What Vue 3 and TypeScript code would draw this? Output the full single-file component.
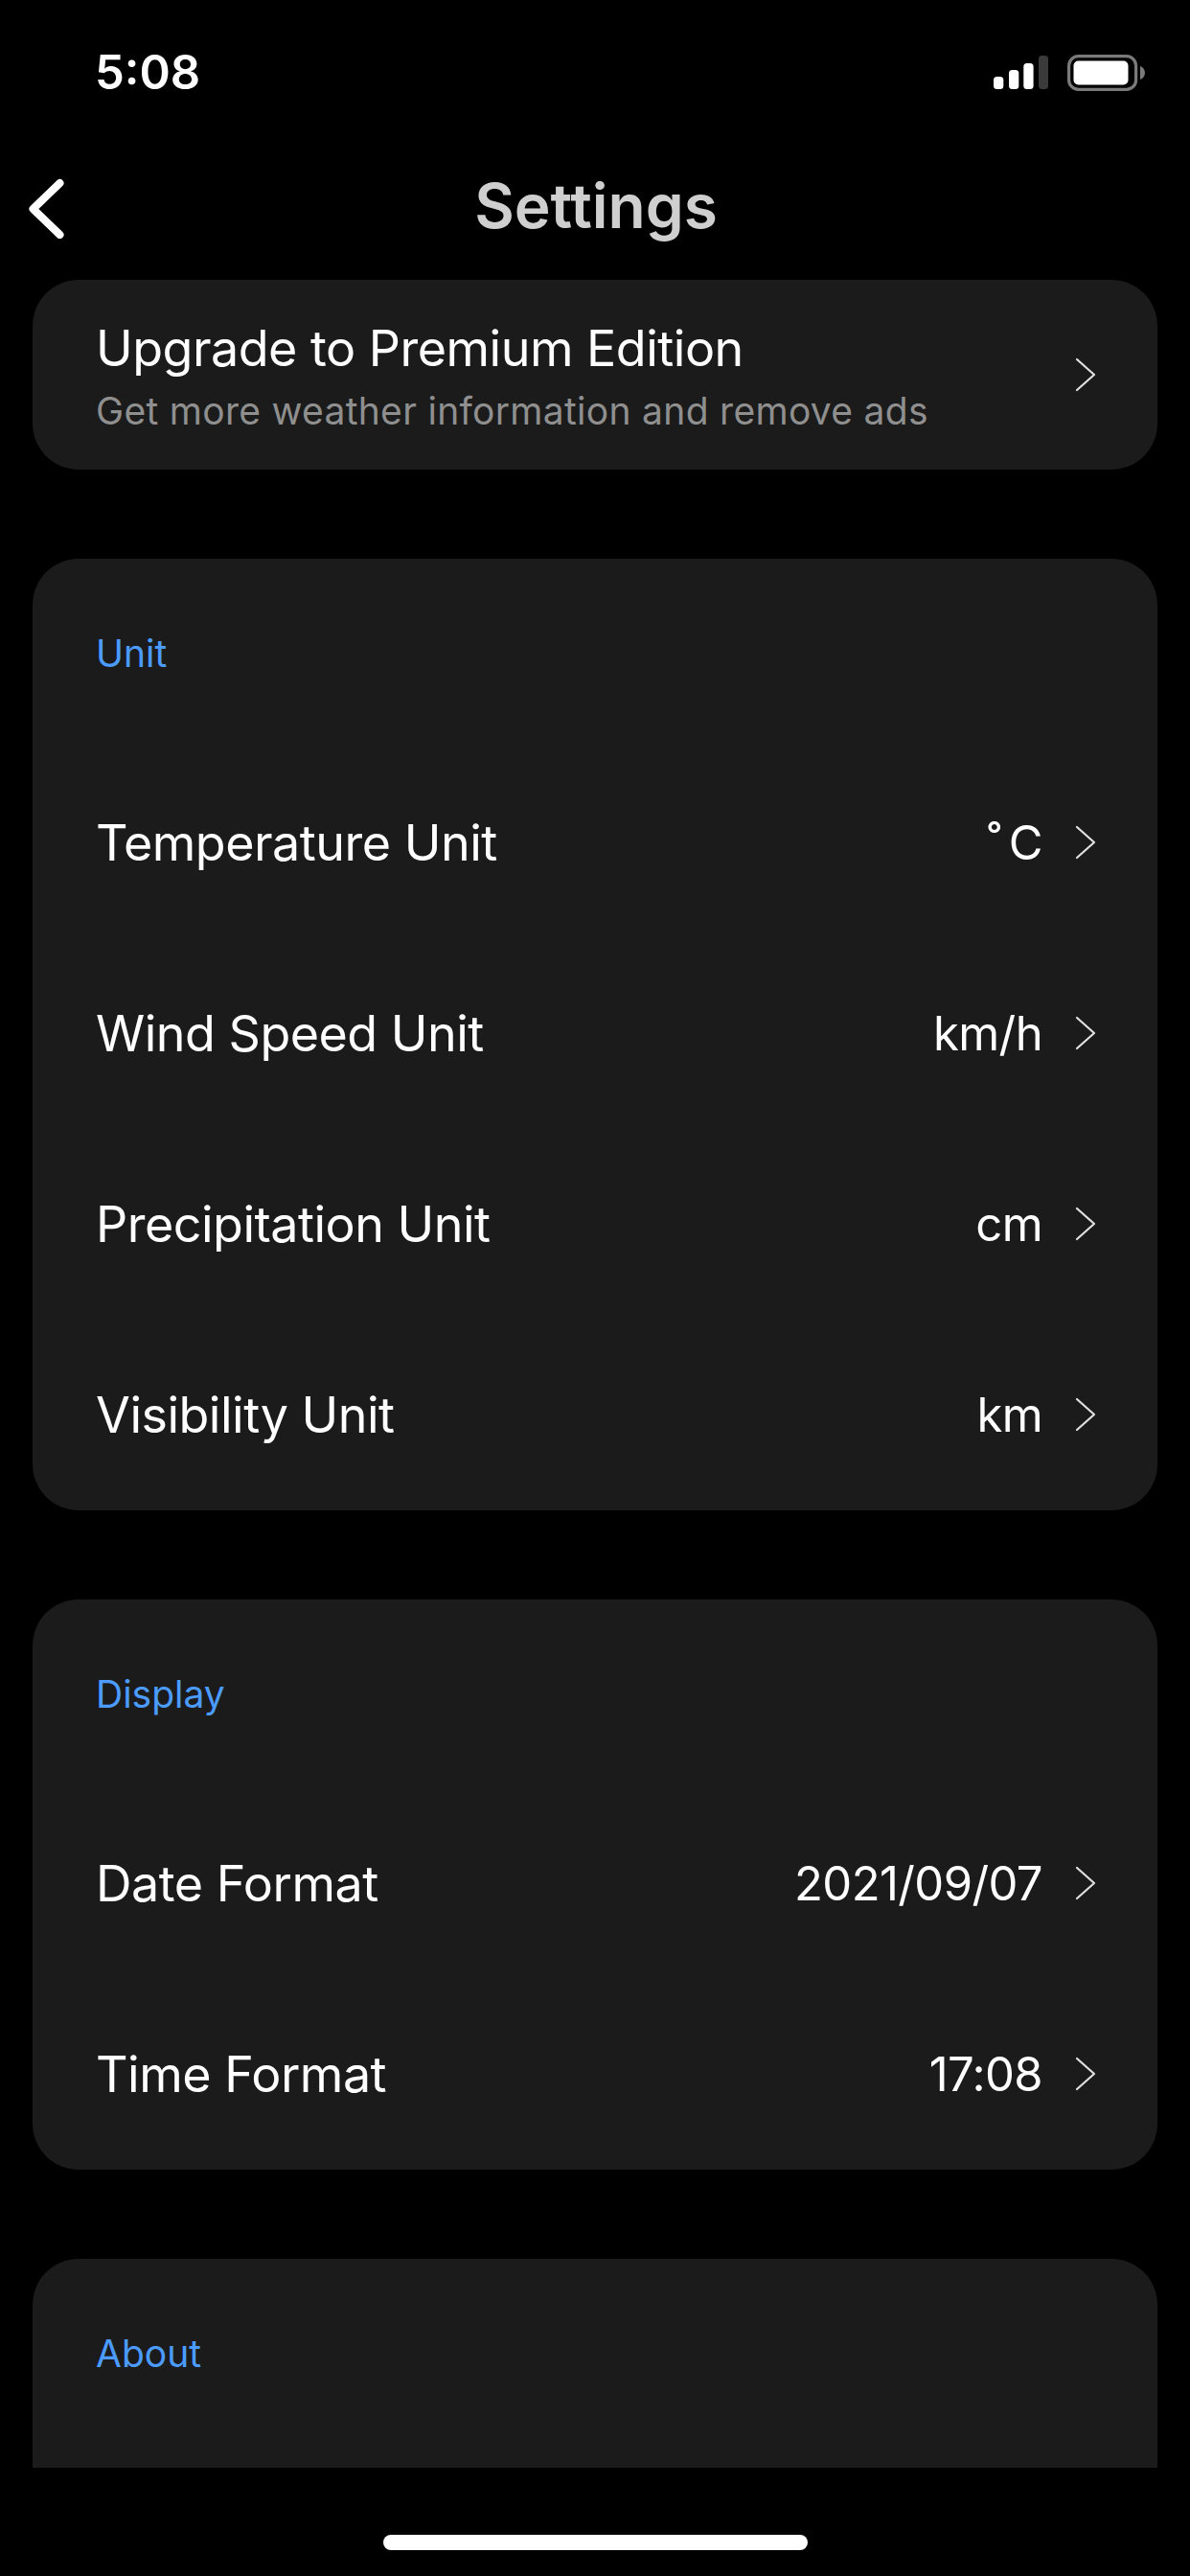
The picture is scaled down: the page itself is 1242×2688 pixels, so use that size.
<script setup lang="ts">
interface Row { label: string; value: string }
interface Section { title: string; rows: Row[]; open?: boolean }
const sections: Section[] = [
  { title: 'Unit', rows: [
    { label: 'Temperature Unit', value: '˚\u2009C' },
    { label: 'Wind Speed Unit', value: 'km/h' },
    { label: 'Precipitation Unit', value: 'cm' },
    { label: 'Visibility Unit', value: 'km' },
  ] },
  { title: 'Display', rows: [
    { label: 'Date Format', value: '2021/09/07' },
    { label: 'Time Format', value: '17:08' },
  ] },
  { title: 'About', rows: [], open: true },
]
</script>

<template>
  <div class="screen">
    <header class="status">
      <span class="time">5:08</span>
      <div class="status-icons">
        <svg class="signal" width="57" height="35" viewBox="0 0 57 35">
          <rect x="0" y="22" width="10.3" height="13" rx="3.5" fill="#fff" />
          <rect x="16" y="15" width="10.3" height="20" rx="3.5" fill="#fff" />
          <rect x="31.3" y="8" width="10.3" height="27" rx="3.5" fill="#fff" />
          <rect x="47" y="0" width="10" height="35" rx="3.5" fill="#3a3a3a" />
        </svg>
        <svg class="battery" width="81" height="38" viewBox="0 0 81 38">
          <rect x="1.6" y="1.6" width="70" height="34.8" rx="10" fill="none" stroke="#7a7a7a" stroke-width="3.2" />
          <rect x="6.5" y="6.5" width="57" height="25" rx="5" fill="#fff" />
          <path d="M76 12 C79 13 81 16 81 19 C81 22 79 25 76 26 Z" fill="#7a7a7a" />
        </svg>
      </div>
    </header>

    <nav class="nav">
      <svg class="back" width="38" height="64" viewBox="0 0 38 64">
        <path d="M33.5 6 L5.5 33 L33.5 60" fill="none" stroke="#fff" stroke-width="8" stroke-linecap="round" stroke-linejoin="round" />
      </svg>
      <h1 class="title">Settings</h1>
    </nav>

    <main class="scroll">
      <section class="card promo">
        <div class="promo-text">
          <div class="promo-title">Upgrade to Premium Edition</div>
          <div class="promo-sub">Get more weather information and remove ads</div>
        </div>
        <svg class="chev" width="22" height="36" viewBox="0 0 22 36">
          <path d="M2 2 L20 18 L2 34" fill="none" stroke="#e0e0e0" stroke-width="2.2" stroke-linecap="round" stroke-linejoin="round" />
        </svg>
      </section>

      <section v-for="s in sections" :key="s.title" class="card" :class="{ open: s.open }">
        <div class="section-title">{{ s.title }}</div>
        <div v-for="r in s.rows" :key="r.label" class="row">
          <span class="label">{{ r.label }}</span>
          <span class="value">{{ r.value }}</span>
          <svg class="chev" width="22" height="36" viewBox="0 0 22 36">
            <path d="M2 2 L20 18 L2 34" fill="none" stroke="#e0e0e0" stroke-width="2.2" stroke-linecap="round" stroke-linejoin="round" />
          </svg>
        </div>
      </section>
    </main>

    <footer class="home">
      <div class="home-bar"></div>
    </footer>
  </div>
</template>

<style>
html, body { margin: 0; background: #000; }
</style>

<style scoped>
.screen {
  width: 1242px;
  height: 2688px;
  background: #000;
  display: flex;
  flex-direction: column;
  overflow: hidden;
  font-family: Inter, "Liberation Sans", sans-serif;
  font-weight: 400;
  color: #fff;
}
.status {
  height: 150px;
  flex: none;
  box-sizing: border-box;
  padding: 0 47px 0 99px;
  display: flex;
  justify-content: space-between;
  align-items: flex-start;
}
.time {
  margin-top: 49px;
  font-size: 49px;
  line-height: 54px;
  font-weight: 600;
}
.status-icons {
  margin-top: 57px;
  display: flex;
  align-items: flex-start;
  gap: 20px;
}
.signal { margin-top: 1px; }
.nav {
  height: 141px;
  flex: none;
  box-sizing: border-box;
  position: relative;
  display: flex;
  align-items: center;
  justify-content: center;
  padding: 0 0 12px 2px;
}
.back { position: absolute; left: 29px; top: 35px; }
.title {
  margin: 0;
  font-size: 64px;
  font-weight: 600;
  color: #cfcfcf;
}
.scroll {
  flex: 1;
  min-height: 0;
  overflow: hidden;
  padding: 0.5px 34px 0;
  display: flex;
  flex-direction: column;
  gap: 93px;
}
.card {
  flex: none;
  background: #1b1b1b;
  border-radius: 48px;
}
.card.open { min-height: 400px; }
.promo {
  height: 198px;
  box-sizing: border-box;
  padding: 0 64px 0 66px;
  display: flex;
  align-items: center;
  justify-content: space-between;
}
.promo-text { padding-top: 4px; }
.promo-title { font-size: 52px; line-height: 64px; letter-spacing: -0.5px; }
.promo-sub { font-size: 39px; line-height: 50px; letter-spacing: 0.3px; color: #8f8f8f; margin-top: 8px; }
.section-title {
  height: 197px;
  box-sizing: border-box;
  padding: 0 64px 0 66px;
  display: flex;
  align-items: center;
  font-size: 39px;
  color: #4c9bff;
}
.row {
  height: 199px;
  box-sizing: border-box;
  padding: 0 64px 0 66px;
  display: flex;
  align-items: center;
}
.label { flex: 1; font-size: 52px; letter-spacing: -0.5px; }
.value {
  font-size: 49px;
  letter-spacing: -0.6px;
  margin-right: 34px;
}
.home {
  height: 113px;
  flex: none;
  display: flex;
  justify-content: center;
  padding-top: 70px;
  box-sizing: border-box;
}
.home-bar {
  width: 443px;
  height: 16px;
  border-radius: 8px;
  background: #fff;
}
</style>
